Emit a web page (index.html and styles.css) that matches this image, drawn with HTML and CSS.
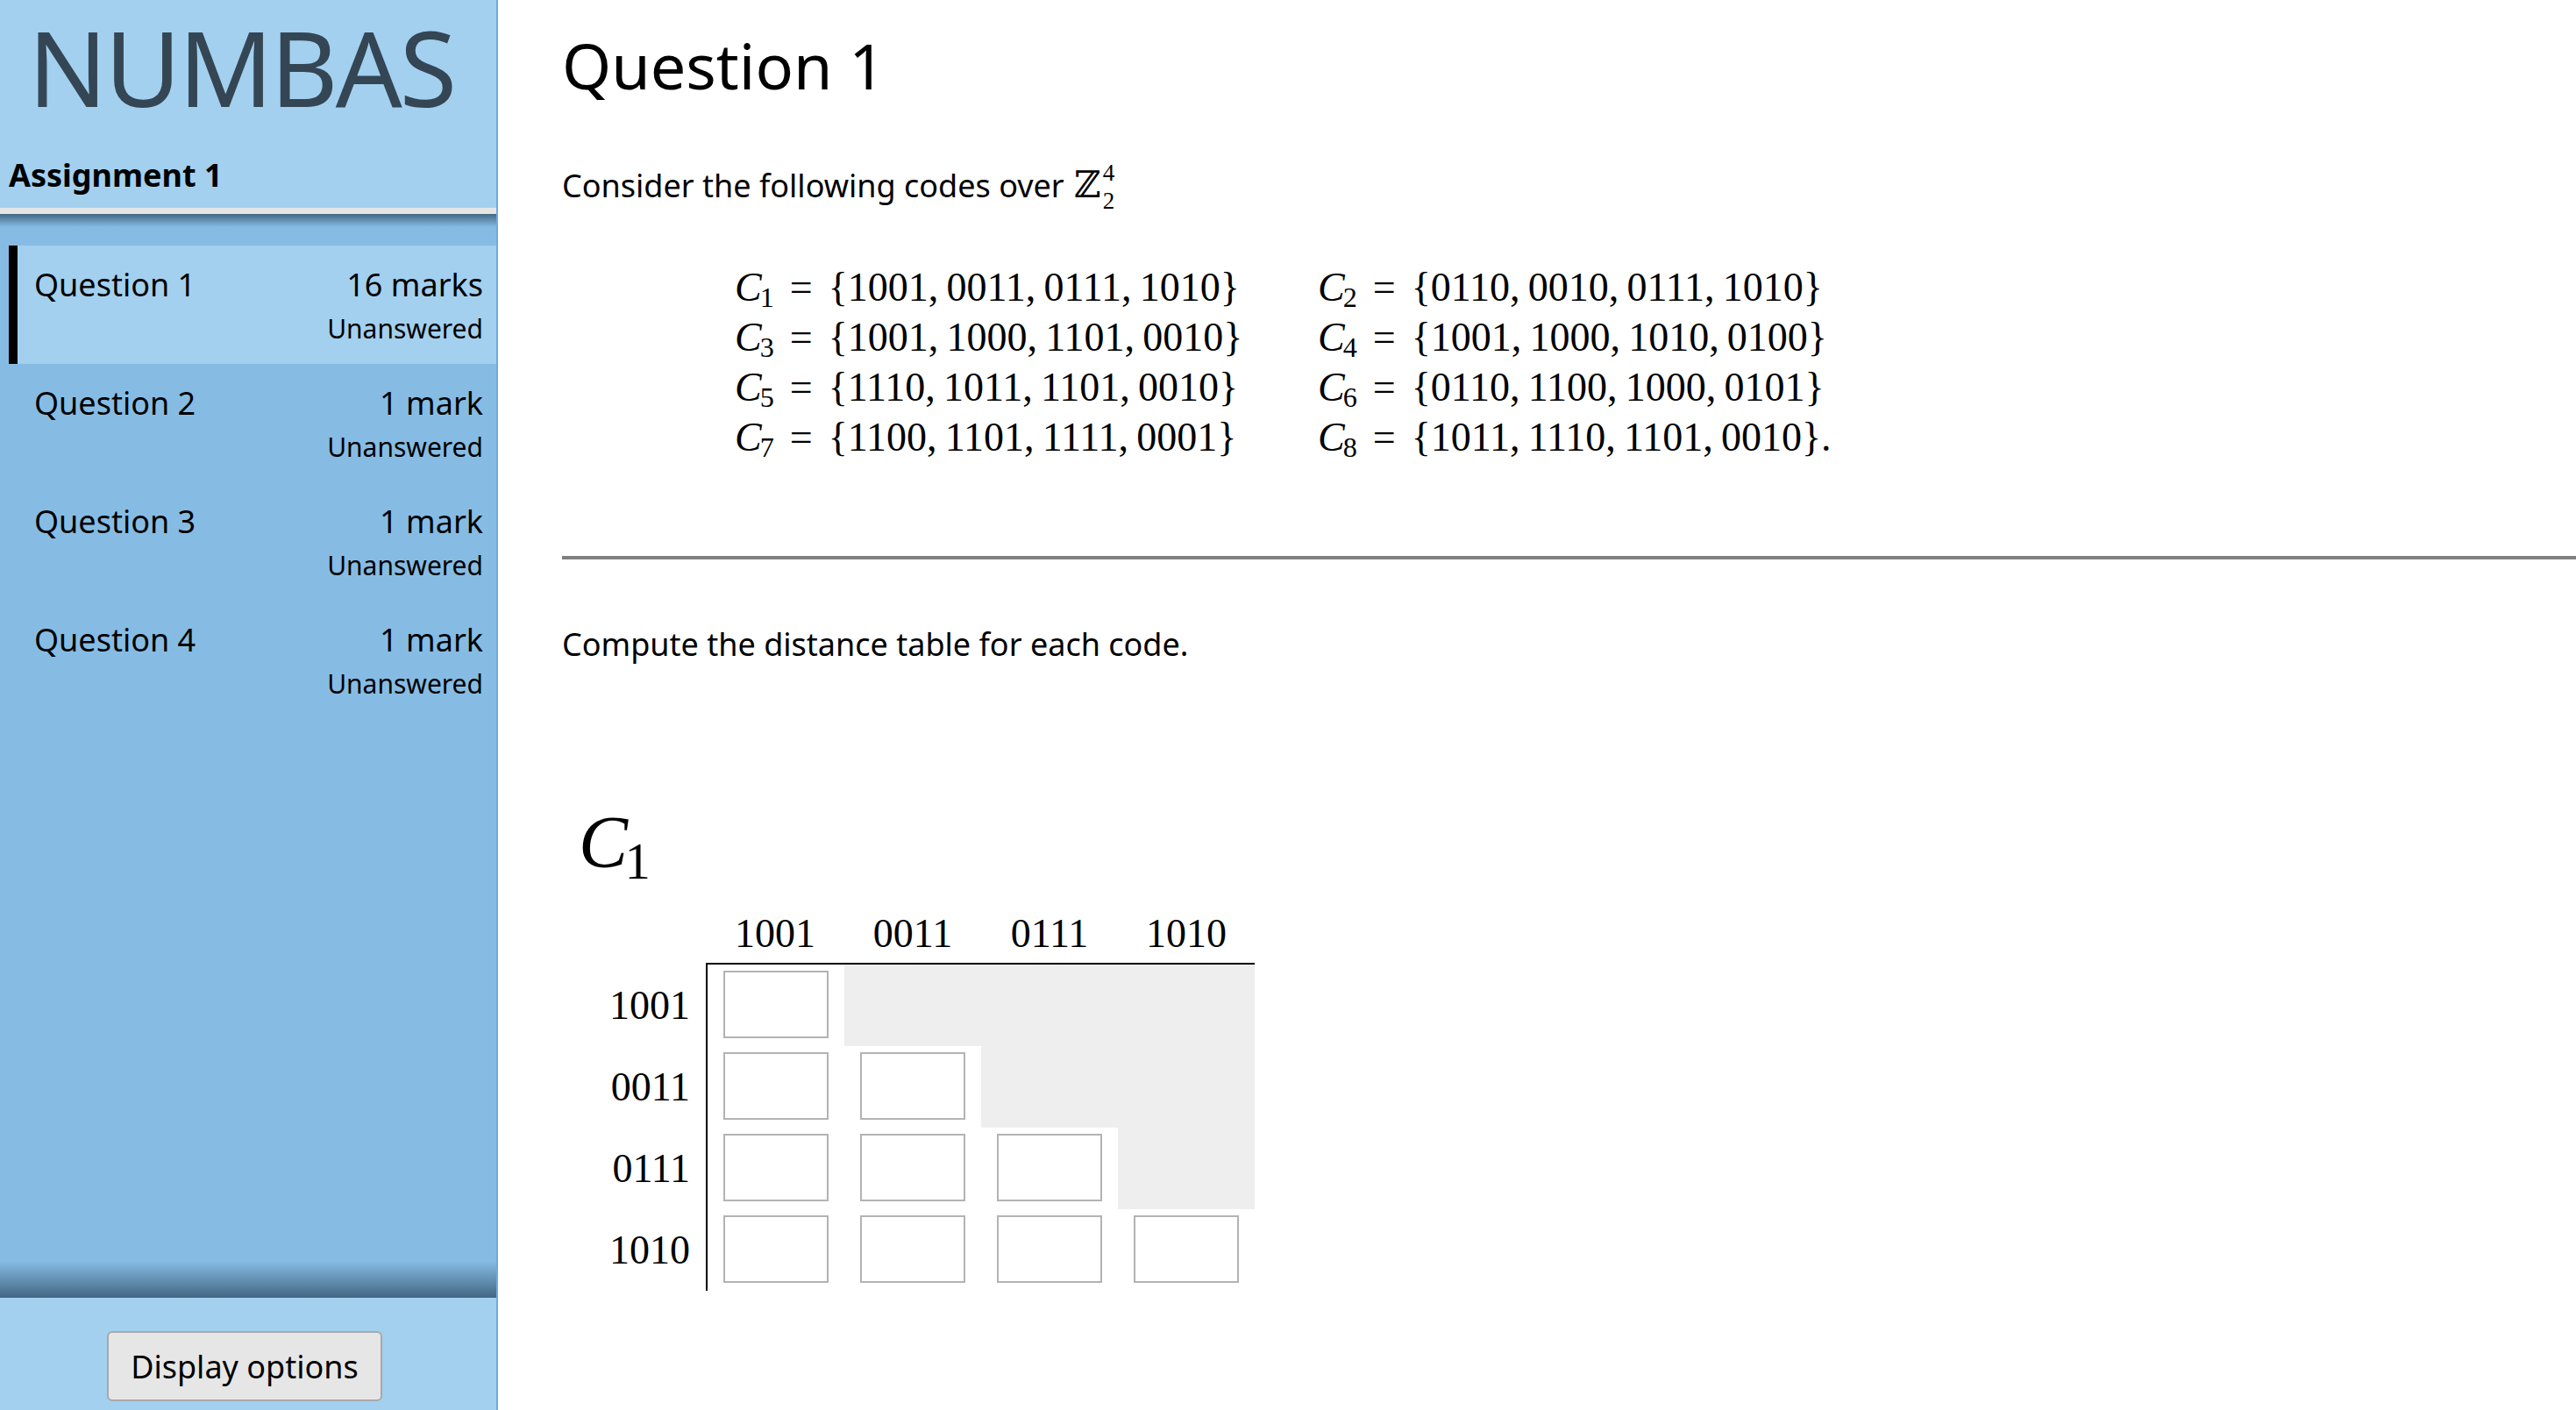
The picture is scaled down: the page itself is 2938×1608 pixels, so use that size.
FILE: index.html
```html
<!DOCTYPE html>
<html lang="en">
<head>
<meta charset="utf-8">
<title>Numbas - Assignment 1</title>
<link rel="stylesheet" href="styles.css">
</head>
<body>
<div class="app">
  <aside class="nav">
    <header class="nav-head">
      <div class="logo">NUMBAS</div>
      <div class="exam-name">Assignment 1</div>
    </header>
    <ul class="qlist">
      <li class="qitem active"><span class="qname">Question 1</span><span class="qmarks">16 marks</span><span class="qstatus">Unanswered</span></li>
      <li class="qitem"><span class="qname">Question 2</span><span class="qmarks">1 mark</span><span class="qstatus">Unanswered</span></li>
      <li class="qitem"><span class="qname">Question 3</span><span class="qmarks">1 mark</span><span class="qstatus">Unanswered</span></li>
      <li class="qitem"><span class="qname">Question 4</span><span class="qmarks">1 mark</span><span class="qstatus">Unanswered</span></li>
    </ul>
    <footer class="nav-foot">
      <button class="btn" type="button">Display options</button>
    </footer>
  </aside>

  <main class="content">
    <h1 class="qtitle">Question 1</h1>
    <p class="intro">Consider the following codes over <span class="bb">ℤ</span><span class="supsub"><span>4</span><span>2</span></span></p>

    <div class="codes">
      <div class="eq"><i>C</i><sub>1</sub><span class="rel">=</span>{1001,<span class="ts"></span>0011,<span class="ts"></span>0111,<span class="ts"></span>1010}</div>
      <div class="eq"><i>C</i><sub>2</sub><span class="rel">=</span>{0110,<span class="ts"></span>0010,<span class="ts"></span>0111,<span class="ts"></span>1010}</div>
      <div class="eq"><i>C</i><sub>3</sub><span class="rel">=</span>{1001,<span class="ts"></span>1000,<span class="ts"></span>1101,<span class="ts"></span>0010}</div>
      <div class="eq"><i>C</i><sub>4</sub><span class="rel">=</span>{1001,<span class="ts"></span>1000,<span class="ts"></span>1010,<span class="ts"></span>0100}</div>
      <div class="eq"><i>C</i><sub>5</sub><span class="rel">=</span>{1110,<span class="ts"></span>1011,<span class="ts"></span>1101,<span class="ts"></span>0010}</div>
      <div class="eq"><i>C</i><sub>6</sub><span class="rel">=</span>{0110,<span class="ts"></span>1100,<span class="ts"></span>1000,<span class="ts"></span>0101}</div>
      <div class="eq"><i>C</i><sub>7</sub><span class="rel">=</span>{1100,<span class="ts"></span>1101,<span class="ts"></span>1111,<span class="ts"></span>0001}</div>
      <div class="eq"><i>C</i><sub>8</sub><span class="rel">=</span>{1011,<span class="ts"></span>1110,<span class="ts"></span>1101,<span class="ts"></span>0010}.</div>
    </div>

    <hr class="sep">

    <p class="prompt">Compute the distance table for each code.</p>

    <section class="part">
      <div class="code-label"><i>C</i><sub>1</sub></div>
      <table class="dist">
        <thead>
          <tr><th class="rlab"></th><th class="col">1001</th><th class="col">0011</th><th class="col">0111</th><th class="col">1010</th></tr>
        </thead>
        <tbody>
          <tr><th class="rlab">1001</th><td class="first"><input type="text"></td><td class="na"></td><td class="na"></td><td class="na"></td></tr>
          <tr><th class="rlab">0011</th><td class="first"><input type="text"></td><td><input type="text"></td><td class="na"></td><td class="na"></td></tr>
          <tr><th class="rlab">0111</th><td class="first"><input type="text"></td><td><input type="text"></td><td><input type="text"></td><td class="na"></td></tr>
          <tr><th class="rlab">1010</th><td class="first"><input type="text"></td><td><input type="text"></td><td><input type="text"></td><td><input type="text"></td></tr>
        </tbody>
      </table>
    </section>
  </main>
</div>
</body>
</html>
```

FILE: styles.css
```css
html, body {
  margin: 0;
  height: 100%;
}

body {
  font-family: "Noto Sans", "Open Sans", sans-serif;
  font-size: 36px;
  color: #000;
  background: #fff;
  overflow: hidden;
}

.app {
  display: flex;
  height: 100vh;
}

/* ---------- sidebar ---------- */
.nav {
  width: 566px;
  flex: none;
  display: flex;
  flex-direction: column;
  border-right: 2px solid #6eaadc;
  background: #86bce4;
}

.nav-head {
  height: 244px;
  box-sizing: border-box;
  padding-top: 11px;
  background: #a3d0ef;
  border-bottom: 7px solid #e5e5e5;
}

.logo {
  font-size: 119px;
  line-height: 130px;
  letter-spacing: -3px;
  color: #344654;
  padding-left: 32px;
}

.exam-name {
  font-weight: 700;
  font-size: 36px;
  line-height: 54px;
  margin-top: 32px;
  padding-left: 10px;
}

.qlist {
  flex: 1;
  margin: 0;
  padding: 36px 0 0;
  list-style: none;
  background:
    linear-gradient(to bottom, rgba(44, 74, 98, 0.75), rgba(44, 74, 98, 0) 15px),
    linear-gradient(to top, rgba(44, 74, 98, 0.75), rgba(44, 74, 98, 0) 42px),
    #86bce4;
}

.qitem {
  display: grid;
  grid-template-columns: 1fr auto;
  margin-left: 10px;
  border-left: 10px solid transparent;
  padding: 18px 15px 18px 19px;
  line-height: 54px;
}

.qitem.active {
  background: #a3d0ef;
  border-left-color: #000;
}

.qmarks {
  text-align: right;
}

.qstatus {
  grid-column: 2;
  text-align: right;
  font-size: 30px;
  line-height: 45px;
}

.nav-foot {
  height: 128px;
  flex: none;
  box-sizing: border-box;
  padding-top: 38px;
  padding-right: 8px;
  text-align: center;
  background: #a3d0ef;
}

.btn {
  font-family: inherit;
  font-size: 36px;
  height: 80px;
  padding: 0 25px;
  color: #000;
  background: #e6e6e6;
  border: 2px solid #a8a8a8;
  border-radius: 6px;
}

/* ---------- main ---------- */
.content {
  flex: 1;
  padding-left: 73px;
  min-width: 0;
}

.qtitle {
  font-size: 72px;
  font-weight: 400;
  line-height: 96px;
  margin: 26px 0 0;
}

.intro {
  margin: 62px 0 0;
  line-height: 54px;
}

.bb {
  font-family: "DejaVu Serif", serif;
  font-size: 42px;
  margin-left: 2px;
}

.supsub {
  display: inline-flex;
  flex-direction: column;
  font-family: "Liberation Serif", serif;
  font-size: 27px;
  line-height: 32px;
  vertical-align: 19px;
  margin: -8px 0 -8px 2px;
}

.codes {
  display: grid;
  grid-template-columns: 665px auto;
  grid-auto-rows: 57px;
  margin: 60px 0 0 197px;
  font-family: "Liberation Serif", serif;
  font-size: 46px;
  line-height: 57px;
  white-space: nowrap;
}

.eq i,
.code-label i {
  font-style: italic;
}

.eq sub,
.code-label sub {
  font-size: 0.7em;
  line-height: 0;
  vertical-align: -0.22em;
  margin-left: -0.06em;
}

.rel {
  margin: 0 0.39em;
}

.ts {
  display: inline-block;
  width: 0.2em;
}

.sep {
  border: 0;
  height: 4px;
  background: #808080;
  margin: 107px 0 0;
}

.prompt {
  margin: 70px 0 0;
  line-height: 54px;
}

.part {
  margin-top: 149px;
  padding-left: 19px;
}

.code-label {
  font-family: "Liberation Serif", serif;
  font-size: 84px;
  line-height: 100px;
}

.dist {
  border-spacing: 0;
  margin-top: 29px;
  font-family: "Liberation Serif", serif;
  font-size: 46px;
}

.dist th {
  font-weight: 400;
}

.dist .rlab {
  width: 127px;
  padding: 0 18px 0 0;
  text-align: right;
}

.dist .col {
  padding: 0 18px 8px;
  line-height: 50px;
  text-align: center;
  border-bottom: 2px solid #000;
}

.dist td {
  padding: 7px 18px 9px;
}

.dist td.first {
  border-left: 2px solid #000;
}

.dist td.na {
  background: #eeeeee;
}

.dist input {
  display: block;
  box-sizing: border-box;
  width: 120px;
  height: 77px;
  margin: 0;
  padding: 0;
  border: 2px solid #b3b3b3;
  background: #fff;
}
```
